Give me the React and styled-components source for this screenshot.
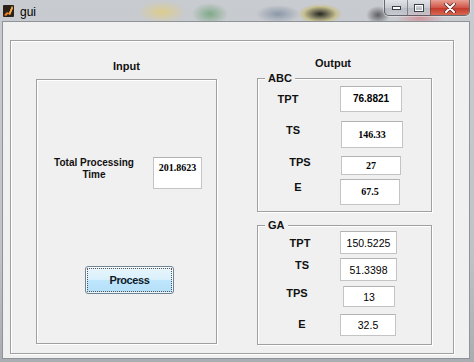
import React from 'react';
import styled, { createGlobalStyle } from 'styled-components';

const GlobalStyle = createGlobalStyle`
  html, body {
    margin: 0;
    padding: 0;
  }
  body {
    width: 474px;
    height: 362px;
    overflow: hidden;
    font-family: "Liberation Sans", Arial, sans-serif;
    color: #111;
  }
`;

const Window = styled.div`
  width: 474px;
  height: 362px;
  box-sizing: border-box;
  display: flex;
  flex-direction: column;
  background:
    radial-gradient(ellipse 24px 11px at 162px 12px, rgba(222, 205, 140, 0.95), rgba(222, 205, 140, 0) 100%),
    radial-gradient(ellipse 18px 11px at 210px 14px, rgba(110, 160, 120, 0.8), rgba(110, 160, 120, 0) 100%),
    radial-gradient(ellipse 22px 9px at 278px 14px, rgba(120, 135, 155, 0.75), rgba(120, 135, 155, 0) 100%),
    radial-gradient(ellipse 22px 10px at 320px 14px, rgba(30, 30, 25, 0.95), rgba(200, 180, 60, 0.4) 75%, rgba(200, 180, 60, 0) 100%),
    radial-gradient(ellipse 12px 9px at 378px 15px, rgba(60, 60, 65, 0.75), rgba(60, 60, 65, 0) 100%),
    radial-gradient(ellipse 24px 9px at 420px 18px, rgba(210, 120, 130, 0.65), rgba(210, 120, 130, 0) 100%),
    linear-gradient(to bottom, #c8cbcf 0%, #bfc3c7 70%, #a9adb1 100%);
`;

const TitleBar = styled.div`
  height: 22px;
  flex-shrink: 0;
  display: flex;
  align-items: flex-start;
  padding-left: 3px;
`;

const AppIcon = styled.svg`
  width: 11px;
  height: 12px;
  margin-top: 5px;
  flex-shrink: 0;
`;

const TitleText = styled.span`
  margin-left: 6px;
  padding-top: 4px;
  font-size: 12px;
  line-height: 16px;
  color: #000;
`;

const Controls = styled.div`
  margin-left: auto;
  margin-right: 4px;
  display: flex;
  height: 15px;
  border: 1px solid rgba(50, 55, 65, 0.65);
  border-top: none;
  border-radius: 0 0 5px 5px;
  overflow: hidden;
  box-shadow: 0 0 0 1px rgba(255, 255, 255, 0.35);
`;

const CtrlButton = styled.div`
  width: ${p => p.$w}px;
  display: flex;
  align-items: center;
  justify-content: center;
  background: ${p => p.$close
    ? 'linear-gradient(to bottom, #e8a093 0%, #d0574a 50%, #c23a2c 55%, #d9674f 100%)'
    : 'linear-gradient(to bottom, rgba(235,238,242,0.7) 0%, rgba(200,205,212,0.55) 50%, rgba(170,176,185,0.55) 55%, rgba(200,205,212,0.6) 100%)'};
  border-left: ${p => (p.$first ? 'none' : '1px solid rgba(60, 65, 75, 0.5)')};
`;

const Client = styled.div`
  flex: 1;
  margin: 0 5px 4px 3px;
  background: #f0f0f0;
  box-sizing: border-box;
  padding: 18px 15px 4px 7px;
  display: flex;
  box-shadow: 0 0 0 1px #8f9397;
`;

const etched = `
  border: 1px solid #a0a0a0;
  box-shadow: 1px 1px 0 #ffffff, inset 1px 1px 0 #ffffff;
  box-sizing: border-box;
`;

const OuterPanel = styled.div`
  ${etched}
  flex: 1;
  display: flex;
  align-items: flex-start;
`;

const Column = styled.div`
  display: flex;
  flex-direction: column;
  margin-left: ${p => p.$ml}px;
  width: ${p => p.$w}px;
`;

const Heading = styled.div`
  font-size: 11px;
  font-weight: bold;
  line-height: 14px;
  text-align: center;
  padding-top: ${p => p.$pt}px;
  padding-right: ${p => p.$pr || 0}px;
  margin-bottom: ${p => p.$mb}px;
`;

const InputPanel = styled.div`
  ${etched}
  height: 265px;
  display: flex;
  flex-direction: column;
  align-items: flex-start;
`;

const InputRow = styled.div`
  display: flex;
  align-items: flex-start;
  margin-top: 77px;
`;

const TimeLabel = styled.div`
  width: 90px;
  margin-left: 12px;
  font-size: 10px;
  font-weight: bold;
  line-height: 12px;
  text-align: center;
`;

const ValueBox = styled.div`
  flex-shrink: 0;
  box-sizing: border-box;
  width: ${p => p.$w}px;
  height: ${p => p.$h}px;
  margin-left: ${p => p.$ml || 0}px;
  background: #ffffff;
  border: 1px solid #c4c4c4;
  border-top-color: #b2b2b2;
  display: flex;
  justify-content: center;
  align-items: ${p => (p.$top ? 'flex-start' : 'center')};
  padding-top: ${p => (p.$top ? 3 : 0)}px;
  line-height: 14px;
  color: #000;
  font-family: ${p => (p.$font === 'serif'
    ? '"Liberation Serif", "Times New Roman", serif'
    : '"Liberation Sans", Arial, sans-serif')};
  font-size: ${p => (p.$font === 'sans' ? 10.5 : 10)}px;
  font-weight: ${p => (p.$font === 'sans' ? 'normal' : 'bold')};
`;

const ProcessButton = styled.button`
  margin-top: 77px;
  margin-left: 48px;
  width: 89px;
  height: 28px;
  padding: 0;
  border: 1px solid #6f8494;
  border-radius: 3px;
  background: linear-gradient(to bottom, #eaf6fd 0%, #d9f0fc 48%, #bee6fd 52%, #b4dff7 100%);
  box-shadow: inset 0 0 0 1px rgba(255, 255, 255, 0.7);
  outline: 1px dotted #555;
  outline-offset: -3px;
  font-family: "Liberation Sans", Arial, sans-serif;
  font-size: 11px;
  font-weight: bold;
  letter-spacing: -0.4px;
  color: #0d1a26;
  cursor: pointer;
`;

const Group = styled.div`
  ${etched}
  position: relative;
  height: ${p => p.$h}px;
  margin-top: ${p => p.$mt || 0}px;
  display: flex;
  flex-direction: column;
`;

const GroupTitle = styled.span`
  position: absolute;
  top: -8px;
  left: 7px;
  padding: 0 3px;
  background: #f0f0f0;
  font-size: 11px;
  font-weight: bold;
  line-height: 14px;
`;

const Row = styled.div`
  display: flex;
  align-items: flex-start;
  margin-top: ${p => p.$mt}px;
`;

const RowLabel = styled.div`
  width: 82px;
  flex-shrink: 0;
  box-sizing: border-box;
  padding-left: ${p => Math.max(0, 2 * p.$shift)}px;
  padding-right: ${p => Math.max(0, -2 * p.$shift)}px;
  margin-top: ${p => p.$mt}px;
  text-align: center;
  font-size: 11px;
  font-weight: bold;
  line-height: 14px;
`;

const abcRows = [
  { label: 'TPT', value: '76.8821', font: 'sansBold', mt: 7, h: 26, shift: -11, lt: 6, bx: 0, w: 62 },
  { label: 'TS', value: '146.33', font: 'serif', mt: 9, h: 27, shift: -6, lt: 2, bx: 1, w: 62 },
  { label: 'TPS', value: '27', font: 'serif', mt: 8, h: 19, shift: 1, lt: -1, bx: 1, w: 60 },
  { label: 'E', value: '67.5', font: 'serif', mt: 4, h: 26, shift: -1, lt: 1, bx: 0, w: 60 },
];

const gaRows = [
  { label: 'TPT', value: '150.5225', font: 'sans', mt: 5, h: 23, shift: 1, lt: 5, bx: 0, w: 57 },
  { label: 'TS', value: '51.3398', font: 'sans', mt: 4, h: 23, shift: 3, lt: 0, bx: 0, w: 57 },
  { label: 'TPS', value: '13', font: 'sans', mt: 5, h: 21, shift: -2, lt: 0, bx: 3, w: 52 },
  { label: 'E', value: '32.5', font: 'sans', mt: 7, h: 22, shift: 3, lt: 3, bx: 0, w: 56 },
];

const ResultGroup = ({ title, rows, h, mt }) => (
  <Group $h={h} $mt={mt}>
    <GroupTitle>{title}</GroupTitle>
    {rows.map(r => (
      <Row key={r.label} $mt={r.mt}>
        <RowLabel $shift={r.shift} $mt={r.lt}>{r.label}</RowLabel>
        <ValueBox $w={r.w} $h={r.h} $ml={r.bx} $font={r.font}>{r.value}</ValueBox>
      </Row>
    ))}
  </Group>
);

export default function App() {
  return (
    <>
      <GlobalStyle />
      <Window>
        <TitleBar>
          <AppIcon viewBox="0 0 11 12">
            <rect x="0" y="0" width="11" height="12" rx="1" fill="#2b2118" />
            <path d="M1 10 L4 7 L6 8 L9 1 L10 3 L7 10 L5 9 L3 11 Z" fill="#e8802a" />
            <path d="M6 8 L9 1 L10 3 L7 10 Z" fill="#f6b04a" />
          </AppIcon>
          <TitleText>gui</TitleText>
          <Controls>
            <CtrlButton $w={22} $first>
              <svg width="9" height="4" viewBox="0 0 9 4">
                <rect x="0.5" y="0.5" width="8" height="3" fill="#fff" stroke="#3a3f48" strokeWidth="1" />
              </svg>
            </CtrlButton>
            <CtrlButton $w={22}>
              <svg width="10" height="8" viewBox="0 0 10 8">
                <rect x="0.5" y="0.5" width="9" height="7" fill="none" stroke="#3a3f48" strokeWidth="1" />
                <rect x="1.5" y="1.5" width="7" height="5" fill="none" stroke="#fff" strokeWidth="1" />
              </svg>
            </CtrlButton>
            <CtrlButton $w={38} $close>
              <svg width="12" height="10" viewBox="0 0 12 10">
                <path d="M2 1 L10 9 M10 1 L2 9" stroke="#5a2020" strokeWidth="3.4" strokeLinecap="round" />
                <path d="M2 1 L10 9 M10 1 L2 9" stroke="#fff" strokeWidth="2" strokeLinecap="round" />
              </svg>
            </CtrlButton>
          </Controls>
        </TitleBar>
        <Client>
          <OuterPanel>
            <Column $ml={25} $w={181}>
              <Heading $pt={18} $mb={6}>Input</Heading>
              <InputPanel>
                <InputRow>
                  <TimeLabel>Total Processing<br />Time</TimeLabel>
                  <ValueBox $w={49} $h={32} $ml={14} $font="serif" $top>201.8623</ValueBox>
                </InputRow>
                <ProcessButton>Process</ProcessButton>
              </InputPanel>
            </Column>
            <Column $ml={40} $w={175}>
              <Heading $pt={15} $pr={23} $mb={8}>Output</Heading>
              <ResultGroup title="ABC" rows={abcRows} h={134} />
              <ResultGroup title="GA" rows={gaRows} h={120} mt={13} />
            </Column>
          </OuterPanel>
        </Client>
      </Window>
    </>
  );
}
